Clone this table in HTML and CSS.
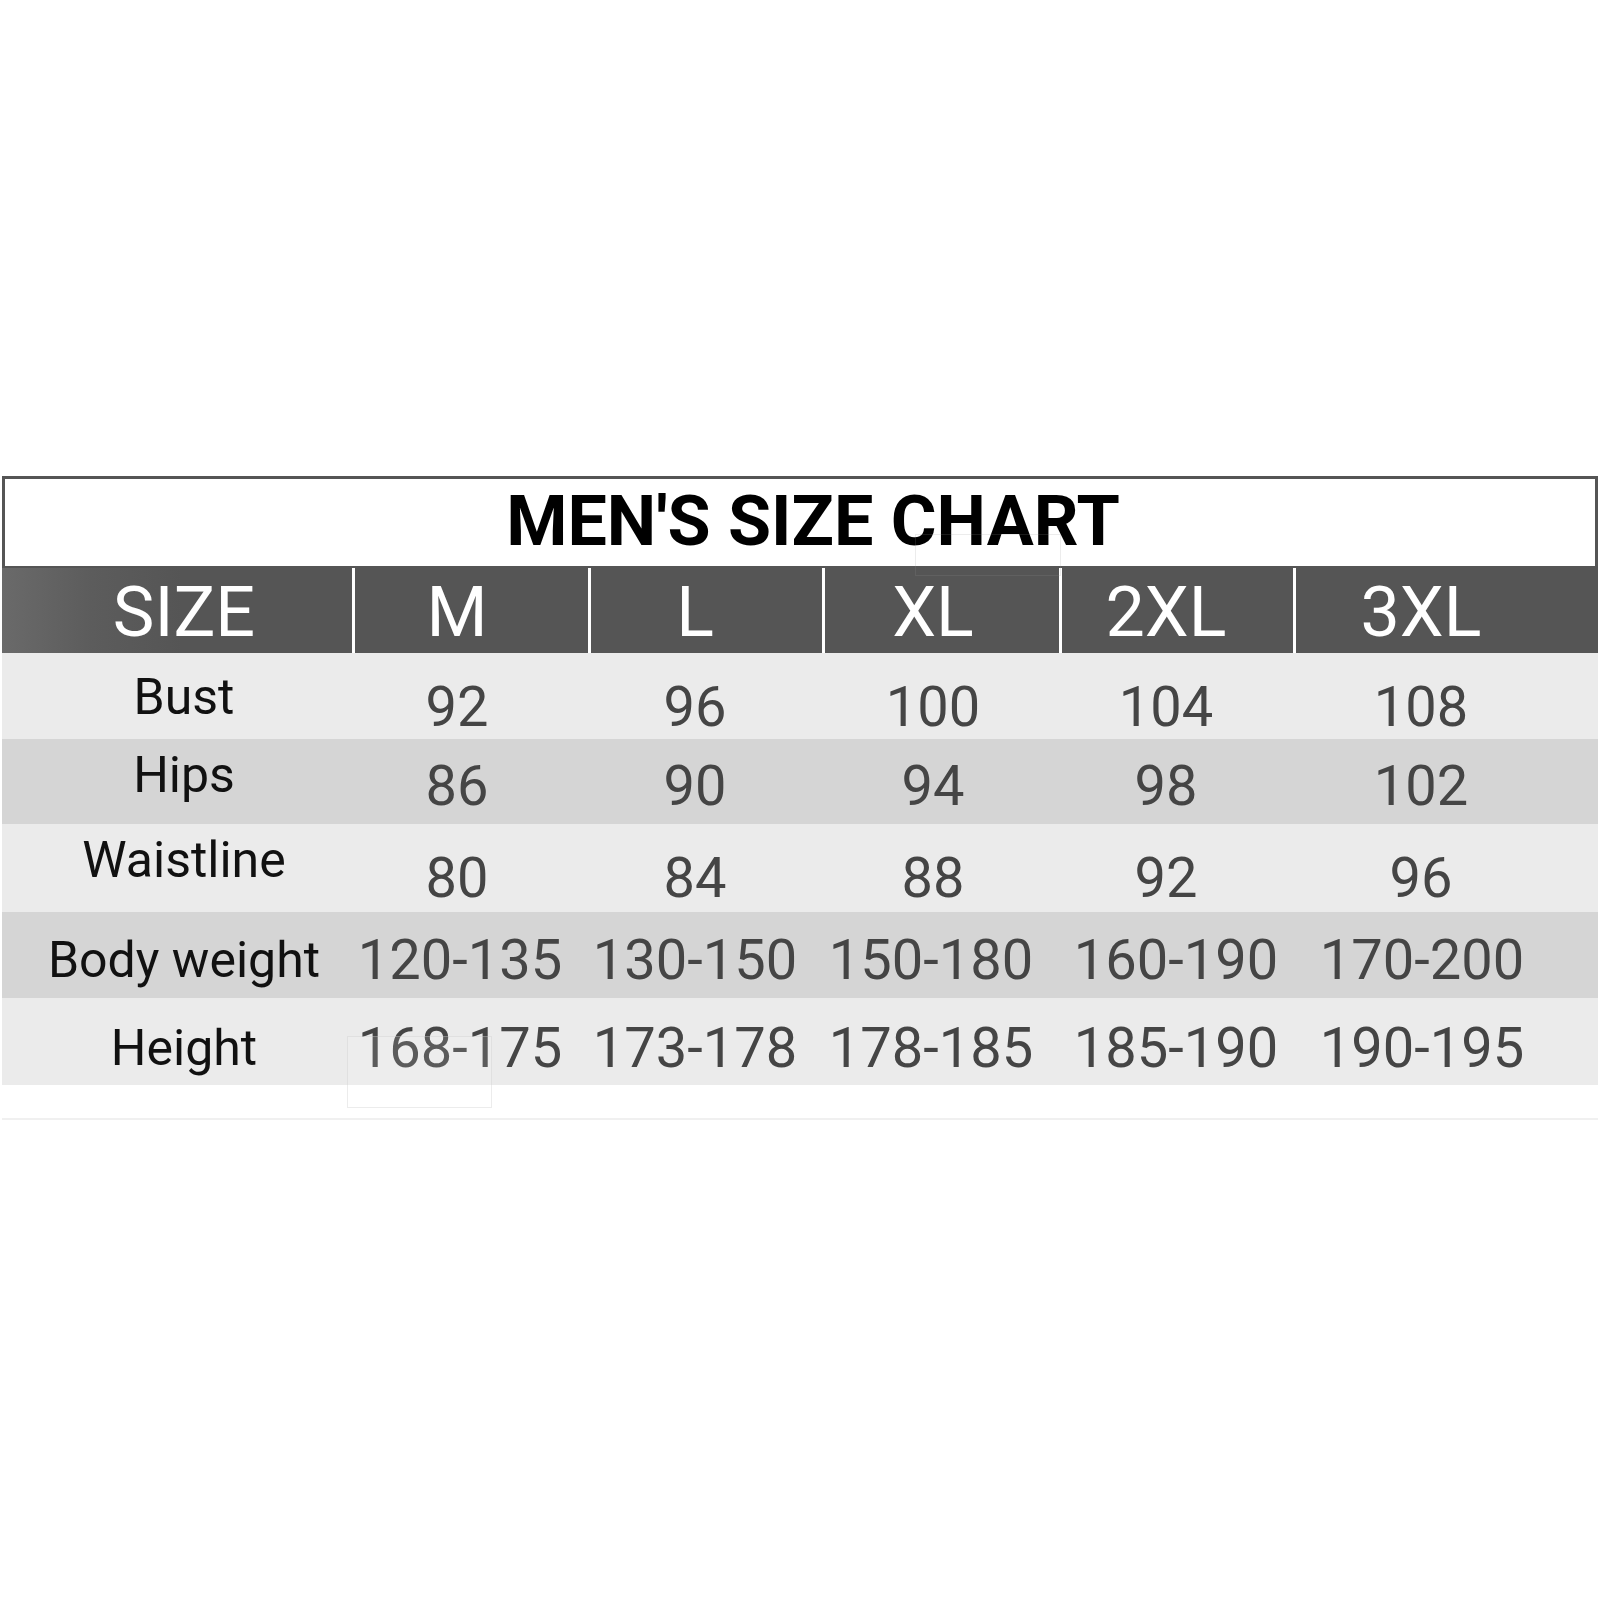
FILE: index.html
```html
<!DOCTYPE html>
<html lang="en">
<head>
<meta charset="utf-8">
<title>Men's Size Chart</title>
<link rel="stylesheet" href="styles.css">
</head>
<body>
<div class="chart">
  <div class="title">MEN'S SIZE CHART</div>
  <div class="row head">
    <div class="hcell c1 first">SIZE</div>
    <div class="hcell c2">M</div>
    <div class="hcell c3">L</div>
    <div class="hcell c4">XL</div>
    <div class="hcell c5">2XL</div>
    <div class="hcell c6">3XL</div>
  </div>
  <div class="row light r-bust">
    <div class="label">Bust</div>
    <div class="val c2">92</div><div class="val c3">96</div><div class="val c4">100</div><div class="val c5">104</div><div class="val c6">108</div>
  </div>
  <div class="row dark r-hips">
    <div class="label">Hips</div>
    <div class="val c2">86</div><div class="val c3">90</div><div class="val c4">94</div><div class="val c5">98</div><div class="val c6">102</div>
  </div>
  <div class="row light r-waist">
    <div class="label">Waistline</div>
    <div class="val c2">80</div><div class="val c3">84</div><div class="val c4">88</div><div class="val c5">92</div><div class="val c6">96</div>
  </div>
  <div class="row dark r-body range">
    <div class="label">Body weight</div>
    <div class="val c2">120-135</div><div class="val c3">130-150</div><div class="val c4">150-180</div><div class="val c5">160-190</div><div class="val c6">170-200</div>
  </div>
  <div class="row light r-height range">
    <div class="label">Height</div>
    <div class="val c2">168-175</div><div class="val c3">173-178</div><div class="val c4">178-185</div><div class="val c5">185-190</div><div class="val c6">190-195</div>
  </div>
  <div class="rule"></div>
  <div class="wm wm-top"></div>
  <div class="wm wm-bottom"></div>
</div>
</body>
</html>
```
FILE: styles.css
```css
html, body {
  margin: 0;
  padding: 0;
  background: #ffffff;
}

body {
  font-family: Roboto, "Liberation Sans", Arial, sans-serif;
}

.chart {
  position: relative;
  width: 1596px;
  margin: 476px 0 0 2px;
}

.title {
  box-sizing: border-box;
  border: 3px solid #555555;
  border-bottom: 0;
  height: 90px;
  padding: 7px 0 0 26px;
  background: #ffffff;
  color: #000000;
  font-weight: 700;
  font-size: 70px;
  line-height: 70px;
  text-align: center;
}

.row {
  display: grid;
  grid-template-columns: 350px 236px 234px 237px 234px 305px;
}

.head {
  height: 87px;
  background: #555555;
}

.hcell {
  box-sizing: border-box;
  color: #ffffff;
  font-size: 70px;
  line-height: 70px;
  text-align: center;
  border-left: 3px solid #ffffff;
  margin-top: 2px;
  height: 85px;
  padding-top: 9px;
}

.hcell.first {
  border-left: 0;
  background: linear-gradient(90deg, #6a6a6a 0px, #5c5c5c 90px, #555555 180px);
}

.light { background: #ebebeb; }
.dark { background: #d5d5d5; }

.r-bust   { height: 86px; --lt: 19px; --dt: 26px; }
.r-hips   { height: 85px; --lt: 11px; --dt: 19px; }
.r-waist  { height: 88px; --lt: 11px; --dt: 26px; }
.r-body   { height: 86px; --lt: 23px; --dt: 20px; }
.r-height { height: 87px; --lt: 25px; --dt: 22px; }

.label {
  color: #111111;
  font-size: 50px;
  line-height: 50px;
  padding-top: var(--lt);
  padding-left: 14px;
  text-align: center;
  white-space: nowrap;
}

.hcell.c1 { padding-left: 14px; }

.val {
  color: #454545;
  font-size: 56px;
  line-height: 56px;
  padding-top: var(--dt);
  text-align: center;
  white-space: nowrap;
}

.c2 { padding-right: 26px; }
.c3 { padding-right: 20px; }
.c4 { padding-right: 15px; }
.c5 { padding-right: 20px; }
.c6 { padding-right: 49px; }

.range .c2 { padding-right: 20px; }
.range .c3 { padding-right: 20px; }
.range .c4 { padding-right: 19px; }
.range .c5 { padding-right: 0; }
.range .c6 { padding-right: 47px; }

.hcell.c2 { padding-right: 29px; }
.hcell.c3 { padding-right: 23px; }
.hcell.c4 { padding-right: 18px; }
.hcell.c5 { padding-right: 23px; }
.hcell.c6 { padding-right: 52px; }

.rule {
  height: 2px;
  margin-top: 33px;
  background: #f0f0f0;
}

/* faint watermark frames laid over the chart */
.wm {
  position: absolute;
  border: 1px solid rgba(150, 150, 150, 0.18);
  pointer-events: none;
}

.wm-top {
  left: 913px;
  top: 58px;
  width: 144px;
  height: 40px;
}

.wm-bottom {
  left: 345px;
  top: 560px;
  width: 143px;
  height: 70px;
  border-color: rgba(200, 200, 200, 0.35);
  background: rgba(255, 255, 255, 0.12);
}
```
